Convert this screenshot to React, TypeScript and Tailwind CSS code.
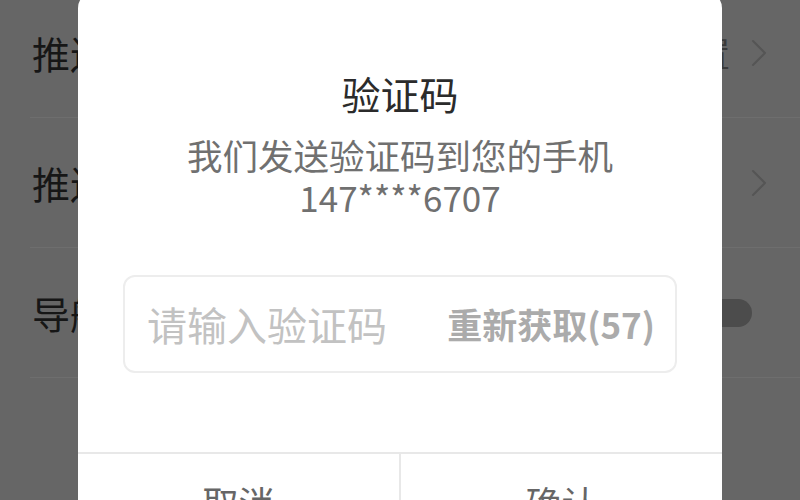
import React from "react";

const font = { fontFamily: '"Noto Sans CJK SC", "Noto Sans", sans-serif' };

function Chevron() {
  return (
    <svg width="18" height="28" viewBox="0 0 18 28" fill="none">
      <path d="M3 2 L15 14 L3 26" stroke="#555555" strokeWidth="2" strokeLinecap="round" strokeLinejoin="round" />
    </svg>
  );
}

export default function App() {
  return (
    <div
      className="relative w-[800px] h-[500px] overflow-hidden bg-[#666666]"
      style={font}
    >
      {/* background settings list (dimmed) */}
      <div className="flex flex-col -mt-[12px]">
        <div className="h-[130px] ml-[30px] flex items-center justify-between border-b border-[#6e6e6e] pl-[2px] pr-[32px]">
          <span className="text-[38px] text-[#161616]">推送通知</span>
          <div className="flex items-center gap-[20px]">
            <span className="text-[34px] text-[#3a3a3a]">已设置</span>
            <Chevron />
          </div>
        </div>
        <div className="h-[130px] ml-[30px] flex items-center justify-between border-b border-[#6e6e6e] pl-[2px] pr-[32px]">
          <span className="text-[38px] text-[#161616]">推送设置</span>
          <Chevron />
        </div>
        <div className="h-[130px] ml-[30px] flex items-center justify-between border-b border-[#6e6e6e] pl-[2px] pr-[48px]">
          <span className="text-[38px] text-[#161616]">导航提示</span>
          <div className="w-[64px] h-[28px] rounded-full bg-[#4c4c4c]" />
        </div>
        <div className="h-[130px] ml-[30px]" />
      </div>

      {/* dialog */}
      <div className="absolute left-[78px] top-[-8px] w-[644px] h-[580px] bg-white rounded-[16px] flex flex-col items-center">
        <div className="mt-[77px] text-[39px] leading-[48px] text-[#2b2b2b]">验证码</div>
        <div className="mt-[17px] text-[35.5px] leading-[42px] text-[#707070]">我们发送验证码到您的手机</div>
        <div className="text-[35px] leading-[42px] text-[#707070]">147****6707</div>

        <div className="mt-[57px] w-[554px] h-[98px] rounded-[12px] border-2 border-[#ededed] flex items-center justify-between pl-[22px] pr-[20px]">
          <span className="text-[40px] text-[#c2c2c2]">请输入验证码</span>
          <span className="text-[35px] font-bold text-[#ababab]">重新获取(57)</span>
        </div>

        <div className="mt-[79px] w-full border-t-2 border-[#e8e8e8] flex">
          <div className="flex-1 flex justify-center pt-[24px] text-[36px] leading-[48px] text-[#666666]">取消</div>
          <div className="w-[2px] bg-[#e8e8e8]" />
          <div className="flex-1 flex justify-center pt-[24px] text-[36px] leading-[48px] text-[#666666]">确认</div>
        </div>
      </div>
    </div>
  );
}
